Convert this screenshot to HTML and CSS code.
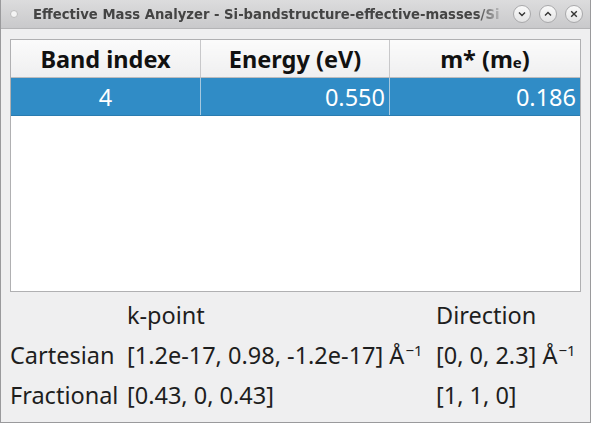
FILE: index.html
```html
<!DOCTYPE html>
<html lang="en">

<head>
    <meta charset="UTF-8">
    <meta name="viewport" content="width=device-width, initial-scale=1.0">
    <title>Effective Mass Analyzer</title>
    <link rel="stylesheet" href="styles.css">
</head>

<body>
    <div class="window">
        <div class="titlebar">
            <span class="win-dot"></span>
            <span class="win-title">Effective Mass Analyzer - Si-bandstructure-effective-masses/Si</span>
            <div class="win-buttons">
                <span class="win-btn">
                    <svg width="12" height="12" viewBox="0 0 12 12"><path d="M3 4.5 L6 7.5 L9 4.5" fill="none" stroke="#333" stroke-width="1.4"/></svg>
                </span>
                <span class="win-btn">
                    <svg width="12" height="12" viewBox="0 0 12 12"><path d="M3 7.5 L6 4.5 L9 7.5" fill="none" stroke="#333" stroke-width="1.4"/></svg>
                </span>
                <span class="win-btn">
                    <svg width="12" height="12" viewBox="0 0 12 12"><path d="M3.2 3.2 L8.8 8.8 M8.8 3.2 L3.2 8.8" fill="none" stroke="#333" stroke-width="1.4"/></svg>
                </span>
            </div>
        </div>

        <div class="content">
            <div class="table-box">
                <table class="band-table">
                    <thead>
                        <tr>
                            <th class="col-band">Band index</th>
                            <th class="col-energy">Energy (eV)</th>
                            <th class="col-mass">m* (m<span class="sub-e">e</span>)</th>
                        </tr>
                    </thead>
                    <tbody>
                        <tr class="selected">
                            <td class="center">4</td>
                            <td class="right">0.550</td>
                            <td class="right">0.186</td>
                        </tr>
                    </tbody>
                </table>
            </div>

            <div class="info-grid">
                <span></span>
                <span class="head">k-point</span>
                <span class="head">Direction</span>

                <span>Cartesian</span>
                <span>[1.2e-17, 0.98, -1.2e-17] Å<span class="sup">−1</span></span>
                <span>[0, 0, 2.3] Å<span class="sup">−1</span></span>

                <span>Fractional</span>
                <span>[0.43, 0, 0.43]</span>
                <span>[1, 1, 0]</span>
            </div>
        </div>
    </div>
</body>

</html>
```

FILE: styles.css
```css
html,
body {
    margin: 0;
    padding: 0;
    background: #efeff0;
}

.window {
    width: 591px;
    height: 423px;
    box-sizing: border-box;
    border: 1px solid #9a9a9c;
    border-top: none;
    background: #efeff0;
    display: flex;
    flex-direction: column;
    overflow: hidden;
}

.titlebar {
    height: 28px;
    flex: none;
    display: flex;
    align-items: center;
    background: linear-gradient(#dcdcdd, #c9c9cb);
    border-bottom: 1px solid #b4b4b6;
    padding: 0 7px 0 9px;
}

.win-dot {
    width: 6px;
    height: 6px;
    border-radius: 50%;
    background: #f4f4f4;
    border: 1px solid #bdbdbd;
    flex: none;
}

.win-title {
    flex: 1;
    min-width: 0;
    margin-left: 15px;
    font-family: "DejaVu Sans", sans-serif;
    font-weight: bold;
    font-size: 13.2px;
    color: #444;
    white-space: nowrap;
    overflow: hidden;
    -webkit-mask-image: linear-gradient(to right, #000 94%, transparent);
}

.win-buttons {
    display: flex;
    gap: 8px;
    margin-left: 8px;
}

.win-btn {
    width: 16px;
    height: 16px;
    border-radius: 50%;
    border: 1px solid #a9a9ab;
    background: linear-gradient(#fafafa, #e4e4e5);
    display: flex;
    align-items: center;
    justify-content: center;
}

.content {
    flex: 1;
    padding: 10px 9px 0 9px;
    font-family: "Noto Sans", sans-serif;
    font-size: 23.5px;
    color: #1e1e1e;
}

.table-box {
    height: 251px;
    background: #fff;
    border: 1px solid #b0b0b2;
    overflow: hidden;
}

.band-table {
    width: 100%;
    border-collapse: collapse;
    table-layout: fixed;
}

.band-table th {
    height: 37px;
    padding: 0 6px;
    font-weight: bold;
    font-size: 23.5px;
    color: #111;
    background: linear-gradient(#fbfbfb, #efeff0);
    border-right: 1px solid #c8c8ca;
    border-bottom: 1px solid #bcbcbe;
    white-space: nowrap;
}

.band-table th:last-child,
.band-table td:last-child {
    border-right: none;
}

.col-band {
    width: 177px;
}

.col-energy {
    width: 176px;
}

.sub-e {
    font-size: 15px;
}

.band-table td {
    height: 37px;
    padding: 0 4px;
    font-size: 23.5px;
    border-right: 1px solid #a5c8df;
}

.selected td {
    background: #308cc6;
    color: #fff;
    border-bottom: 1px solid #2a7cb0;
}

.center {
    text-align: center;
}

.right {
    text-align: right;
}

.info-grid {
    display: grid;
    grid-template-columns: 117px 309px auto;
    row-gap: 10px;
    margin-top: 8px;
    line-height: 30px;
    white-space: nowrap;
}

.sup {
    font-size: 15px;
    vertical-align: 8px;
    line-height: 0;
    margin-left: 1px;
}
```
